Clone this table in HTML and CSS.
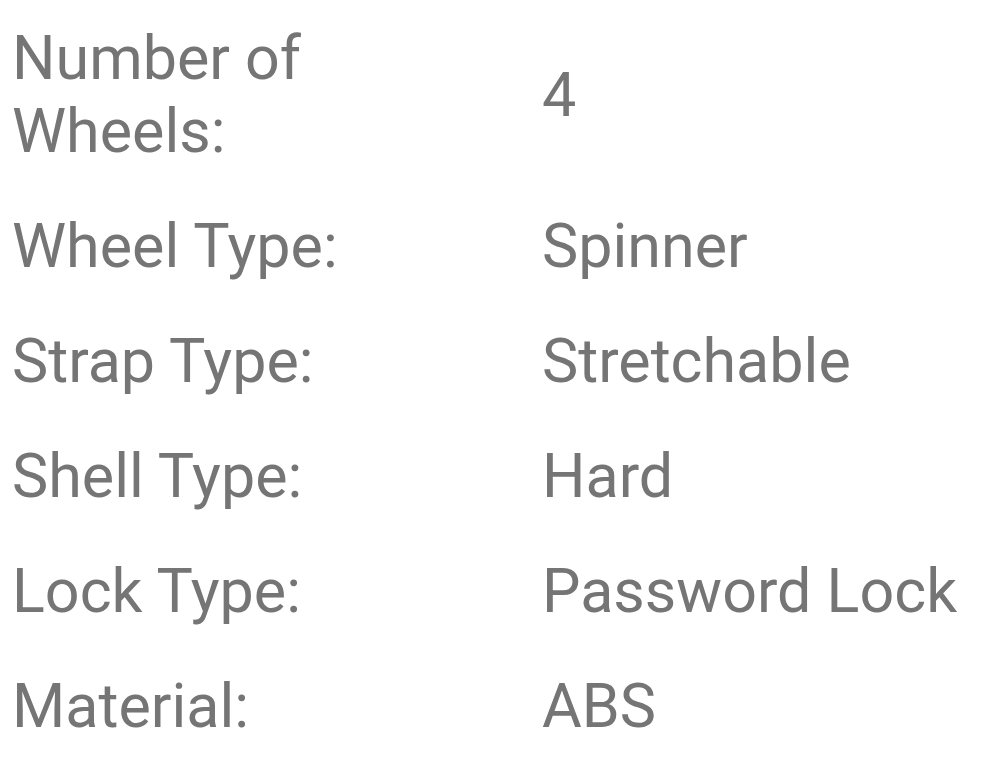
FILE: index.html
```html
<!DOCTYPE html>
<html lang="en">
<head>
<meta charset="utf-8">
<title>Specifications</title>
<link rel="stylesheet" href="styles.css">
</head>
<body>
<div class="specs">
  <div class="label">Number of<br>Wheels:</div>
  <div class="value">4</div>
  <div class="label">Wheel Type:</div>
  <div class="value">Spinner</div>
  <div class="label">Strap Type:</div>
  <div class="value">Stretchable</div>
  <div class="label">Shell Type:</div>
  <div class="value">Hard</div>
  <div class="label">Lock Type:</div>
  <div class="value">Password Lock</div>
  <div class="label">Material:</div>
  <div class="value">ABS</div>
</div>
</body>
</html>
```
FILE: styles.css
```css
html, body {
  margin: 0;
  padding: 0;
  background: #ffffff;
}
body {
  font-family: Roboto, "Liberation Sans", sans-serif;
  font-size: 61px;
  line-height: 73px;
  color: #757575;
}
.specs {
  display: grid;
  grid-template-columns: 542px 1fr;
  align-items: center;
  padding-top: 1px;
}
.label {
  padding: 21px 0 21px 12px;
}
.value {
  padding: 21px 0;
}
```
